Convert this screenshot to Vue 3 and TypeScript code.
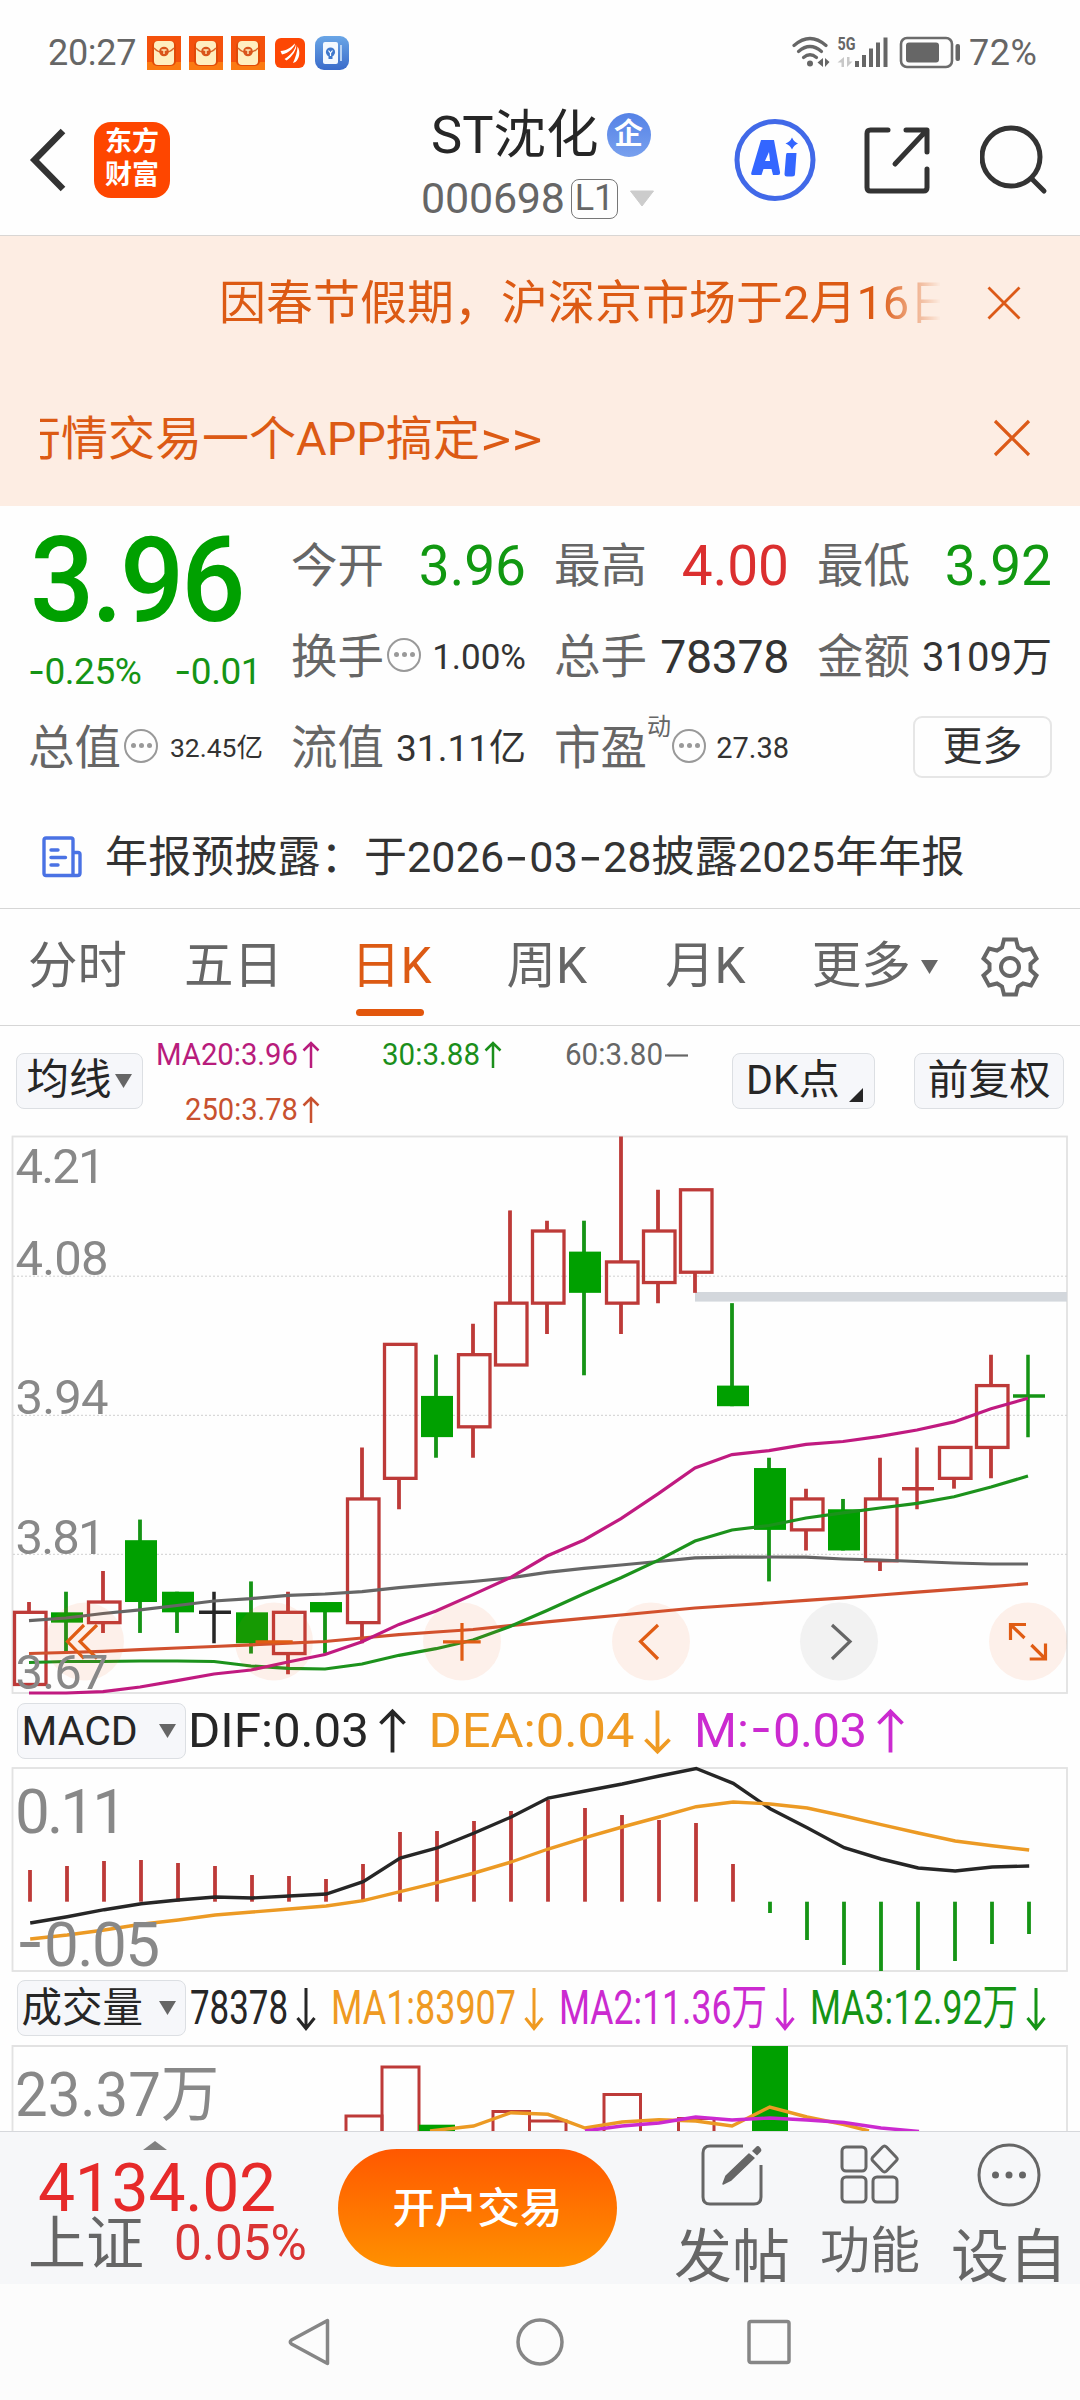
<script setup lang="ts">
type Tone = 'up' | 'down' | 'flat'
type Candle = [tone: Tone, high: number, top: number, bottom: number, low: number]

const STEP = 37
const TOP_PRICE = 4.2117
const priceY = (p: number): number => 1136.5 + (TOP_PRICE - p) * 1030.6

const candles: Candle[] = [
  ['up', 3.76, 3.75, 3.68, 3.68],
  ['down', 3.77, 3.75, 3.74, 3.71],
  ['up', 3.79, 3.76, 3.74, 3.73],
  ['down', 3.84, 3.82, 3.76, 3.73],
  ['down', 3.77, 3.77, 3.75, 3.73],
  ['flat', 3.77, 3.75, 3.75, 3.72],
  ['down', 3.78, 3.75, 3.72, 3.71],
  ['up', 3.77, 3.75, 3.71, 3.69],
  ['down', 3.76, 3.76, 3.75, 3.71],
  ['up', 3.91, 3.86, 3.74, 3.72],
  ['up', 4.01, 4.01, 3.88, 3.85],
  ['down', 4.0, 3.96, 3.92, 3.9],
  ['up', 4.03, 4.0, 3.93, 3.9],
  ['up', 4.14, 4.05, 3.99, 3.99],
  ['up', 4.13, 4.12, 4.05, 4.02],
  ['down', 4.13, 4.1, 4.06, 3.98],
  ['up', 4.2117, 4.09, 4.05, 4.02],
  ['up', 4.16, 4.12, 4.07, 4.05],
  ['up', 4.16, 4.16, 4.08, 4.06],
  ['down', 4.05, 3.97, 3.95, 3.95],
  ['down', 3.9, 3.89, 3.83, 3.78],
  ['up', 3.87, 3.86, 3.83, 3.81],
  ['down', 3.86, 3.85, 3.81, 3.81],
  ['up', 3.9, 3.86, 3.8, 3.79],
  ['up', 3.91, 3.87, 3.87, 3.85],
  ['up', 3.91, 3.91, 3.88, 3.87],
  ['up', 4.0, 3.97, 3.91, 3.88],
  ['down', 4.0, 3.96, 3.96, 3.92],
]
const toneColor: Record<Tone, string> = { up: '#bd3a38', down: '#00a000', flat: '#262626' }
const wickColor: Record<Tone, string> = { up: '#bd3a38', down: '#159415', flat: '#262626' }

const shapes = candles.map(([tone, high, top, bottom, low], i) => {
  const x = 29 + STEP * i
  return {
    x,
    tone,
    fill: toneColor[tone],
    stroke: wickColor[tone],
    high: priceY(high),
    top: priceY(top),
    bottom: priceY(bottom),
    low: priceY(low),
    cross: top === bottom,
  }
})

const line = (ys: number[], x0: number): string =>
  ys.map((y, i) => `${(x0 + STEP * i).toFixed(1)},${y}`).join(' ')

const averages = [
  {
    color: '#d0502e',
    points: line([1653.5, 1652.5, 1651.3, 1649.7, 1648, 1646.5, 1644.8, 1643.2, 1641.5, 1638, 1634.6, 1632, 1629.5, 1625.6, 1621.8, 1618.4, 1615, 1611.5, 1608, 1605.5, 1603, 1600.4, 1597.8, 1595, 1592.2, 1589.4, 1586.6, 1583.7], 29),
  },
  {
    color: '#666666',
    points: line([1620.7, 1618, 1613.5, 1609.8, 1605.5, 1601, 1598.6, 1595.3, 1594, 1591.7, 1587.7, 1584.4, 1581.5, 1577.8, 1572.4, 1568.4, 1565, 1561.5, 1557.8, 1557.2, 1557, 1557.2, 1559, 1560, 1561.5, 1563, 1564, 1564], 29),
  },
  {
    color: '#1c921c',
    points: line([1662.5, 1661.5, 1661.5, 1661, 1661, 1661.5, 1666, 1668.4, 1669, 1664, 1655.3, 1648.7, 1640, 1626.5, 1610.5, 1593.8, 1577.8, 1560.4, 1541, 1530, 1525.5, 1518, 1512.8, 1508, 1503.3, 1496.8, 1487, 1476], 29),
  },
  {
    color: '#c01a80',
    points: line([1693, 1693, 1691.6, 1687, 1680.7, 1674, 1670, 1662, 1654.5, 1641.8, 1624.4, 1611, 1594.6, 1577.8, 1556, 1540, 1518.6, 1493.9, 1468, 1454.6, 1450.6, 1444.4, 1441.5, 1436.4, 1430, 1421.9, 1408.8, 1398.3], 29),
  },
]

const axis = [
  { t: '4.21', y: 1182.5, w: 90 },
  { t: '4.08', y: 1275, w: 93 },
  { t: '3.94', y: 1414, w: 93 },
  { t: '3.81', y: 1554, w: 90 },
  { t: '3.67', y: 1688.5, w: 93 },
]

const macdZero = 1901.7
const macdBars = [1870, 1866, 1861, 1860, 1863, 1866, 1875, 1876, 1879, 1864, 1832, 1831, 1821, 1811, 1800, 1808, 1815, 1820, 1823, 1864, 1913, 1940, 1965, 1971, 1970, 1961, 1944, 1934]
const dif = line([1923, 1916.7, 1909.7, 1903.7, 1900, 1897, 1898, 1896, 1894, 1881.7, 1858, 1848, 1833, 1817, 1798, 1791, 1784, 1776, 1768.5, 1783.3, 1808.7, 1827.7, 1847.7, 1859, 1868, 1871, 1867, 1866], 30.2)
const dea = line([1939, 1935, 1930, 1924.3, 1920, 1915, 1912, 1909, 1906, 1900.7, 1891.7, 1882.7, 1873, 1862, 1849, 1837.7, 1827, 1817, 1806.7, 1802, 1804, 1808, 1816, 1824.7, 1833, 1841, 1845.7, 1850], 30.2)

const volumes = [
  { x: 346, w: 36, y: 2116, up: true },
  { x: 382, w: 37, y: 2067, up: true },
  { x: 419, w: 36, y: 2124.7, up: false },
  { x: 493, w: 36.5, y: 2111.5, up: true },
  { x: 529.5, w: 36.5, y: 2121, up: true },
  { x: 604, w: 36.5, y: 2094.5, up: true },
  { x: 678.5, w: 35.5, y: 2118.5, up: true },
  { x: 752, w: 36, y: 2046, up: false },
]

const tabs = [
  { t: '分时', on: false },
  { t: '五日', on: false },
  { t: '日K', on: true },
  { t: '周K', on: false },
  { t: '月K', on: false },
  { t: '更多', on: false },
]

const legends = [
  { t: 'MA20:3.96', x: 156, w: 142, y: 1065, c: '#b81c7c', a: 311 },
  { t: '30:3.88', x: 382, w: 98, y: 1065, c: '#1b8f1b', a: 493 },
  { t: '250:3.78', x: 185, w: 113, y: 1120, c: '#c8512f', a: 311 },
]

const macdLegend = [
  { t: 'DIF:0.03', x: 188, w: 181, c: '#262626', a: 392.5, up: true },
  { t: 'DEA:0.04', x: 428.5, w: 206, c: '#ef9a22', a: 657.5, up: false },
  { t: 'M:', x: 694, w: 55, c: '#cb2ad0', a: 890.5, up: true },
]
const volLegend = [
  { t: '78378', x: 190, w: 98, c: '#262626', a: 306 },
  { t: 'MA1:83907', x: 331, w: 185, c: '#ef9a22', a: 534 },
  { t: 'MA2:11.36万', x: 559, w: 208, c: '#cb2ad0', a: 785 },
  { t: 'MA3:12.92万', x: 810, w: 208, c: '#159415', a: 1036 },
]
</script>

<template>
  <div class="screen">
    <div class="status">
      <span class="clock">20:27</span>
      <svg v-for="n in 3" :key="n" class="envelope" width="34" height="34" viewBox="0 0 34 34">
        <rect width="34" height="34" fill="#f4510c" />
        <rect y="26" width="34" height="8" fill="#fb7a12" />
        <rect x="5" y="5" width="24" height="25" rx="5" fill="#e04a08" />
        <rect x="7" y="5" width="20" height="24" rx="4" fill="#ffeec0" />
        <path d="M7 12 C12 18 22 18 27 12" fill="none" stroke="#d9682a" stroke-width="1.3" />
        <circle cx="17" cy="15.5" r="4.8" fill="#d9541c" />
        <path d="M14.5 14h5M17 14v4" stroke="#ffe9b8" stroke-width="1.4" />
      </svg>
      <svg class="app4" width="30" height="30" viewBox="0 0 30 30">
        <rect width="30" height="30" rx="6" fill="#fd4705" />
        <path d="M5.500 13C12 13 16 9 20 5.500C20 9 14 15 7 16.500Z M9.500 21C16 17 20 12 21 6.500C22.500 11 17 19 11.500 22.500Z M18 25C20.500 19 22.500 14 22.500 8.500C26 14 24 21 20.500 24Z" fill="#fff" />
      </svg>
      <svg class="app5" width="34" height="34" viewBox="0 0 34 34">
        <defs>
          <linearGradient id="blue" x1="0" y1="0" x2="0" y2="1">
            <stop offset="0" stop-color="#6aa6e6" />
            <stop offset="1" stop-color="#3a6bca" />
          </linearGradient>
        </defs>
        <rect width="34" height="34" rx="9" fill="url(#blue)" />
        <rect x="8" y="6" width="15" height="22" rx="2" fill="#f3f8fe" />
        <rect x="25" y="9" width="2" height="16" fill="#b8d2f2" />
        <circle cx="15.500" cy="16" r="4.600" fill="#3f78cc" />
        <path d="M13.500 19h4v4h-4z" fill="#3f78cc" />
        <path d="M13.500 14.500l2 2.500 2-2.500M15.500 17v3" stroke="#fff" stroke-width="1.200" fill="none" />
      </svg>
      <svg class="signals" width="170" height="36" viewBox="790 35 170 36">
        <g fill="none" stroke="#666" stroke-width="3.200" stroke-linecap="round">
          <path d="M794 45.500 Q810 31.500 826 45.500" />
          <path d="M798.500 51.500 Q810 41.500 821.500 51.500" />
          <path d="M803.500 57.500 Q810 52 816.500 57.500" />
        </g>
        <circle cx="810" cy="63.500" r="3" fill="#666" />
        <path d="M817.500 62.500L823 58V67Z M825 58V67L829.500 62Z" fill="#666" />
        <text x="837.500" y="50" font-size="18" font-weight="700" fill="#666" textLength="18" lengthAdjust="spacingAndGlyphs">5G</text>
        <path d="M837.500 62.500L844 57V67H841.500V62.500Z M847 57V67L852.500 61.500H849.500V57Z" fill="#c8c8c8" />
        <path d="M857 61v6M864 55v12M871 48.500v18.500M878 42.500v24.500M885.500 37.500v29.500" stroke="#666" stroke-width="4" />
        <rect x="901" y="38" width="51" height="29" rx="6" fill="none" stroke="#6c6c6c" stroke-width="2.600" />
        <rect x="906" y="42.500" width="33" height="20" rx="3" fill="#666" />
        <rect x="955.500" y="44" width="4.500" height="17" rx="2" fill="#666" />
      </svg>
      <span class="battery">72%</span>
    </div>

    <header class="header">
      <svg class="back" width="40" height="64" viewBox="0 0 40 64">
        <path d="M34 3 L5.500 32 L34 61" fill="none" stroke="#333" stroke-width="6.500" stroke-linejoin="miter" />
      </svg>
      <div class="logo"><span>东方</span><span>财富</span></div>
      <div class="title">
        <div class="name">ST沈化<span class="badge">企</span></div>
        <div class="code">000698<span class="level">L1</span>
          <svg width="26" height="17" viewBox="0 0 26 17"><path d="M1.500 1h23L13 16z" fill="#ccc" stroke="#ccc" stroke-linejoin="round" /></svg>
        </div>
      </div>
      <svg class="ai" width="82" height="84" viewBox="0 0 82 84">
        <ellipse cx="41" cy="42" rx="38" ry="38.500" fill="none" stroke="#4169e8" stroke-width="5" />
        <path d="M27 22h13l6 32q.500 3-2 3h-5l-1.500-6h-8l-2 6h-9q-2 0-1-3z M31 43h5l-1-9z" fill="#3366ff" fill-rule="evenodd" />
        <path d="M53 35h9.500l-1.500 21q0 2.500-3 2.500h-5q-2.500 0-2.500-2.500l1.500-18.500q0-2.500 1-2.500z" fill="#3366ff" />
        <path d="M58 19.500q2 4.500 6 6q-4 1.500-6 6q-2-4.500-6.500-6q4.500-1.500 6.500-6z" fill="#3366ff" />
      </svg>
      <svg class="share" width="66" height="67" viewBox="0 0 66 67">
        <g fill="none" stroke="#333" stroke-width="5" stroke-linecap="round" stroke-linejoin="round">
          <path d="M24 3H6.500Q3 3 3 6.500V60.500Q3 64 6.500 64H59.500Q63 64 63 60.500V42" />
          <path d="M42 3H63V25M61 5L31 37" />
        </g>
      </svg>
      <svg class="search" width="68" height="70" viewBox="0 0 68 70">
        <circle cx="31" cy="32" r="29" fill="none" stroke="#333" stroke-width="5" />
        <path d="M52 54 L64 66" stroke="#333" stroke-width="5" stroke-linecap="round" />
      </svg>
    </header>

    <section class="banner">
      <div class="notice first">
        <div class="marquee fade">因春节假期，沪深京市场于2月16日</div>
        <svg width="34" height="34" viewBox="0 0 34 34"><path d="M1.500 1.500l31 31M32.500 1.500l-31 31" stroke="#dc5a18" stroke-width="2.800" /></svg>
      </div>
      <div class="notice second">
        <div class="marquee clip"><span>行情交易一个APP搞定<u>&gt;&gt;</u></span></div>
        <svg width="38" height="38" viewBox="0 0 38 38"><path d="M2 2l34 34M36 2L2 36" stroke="#dc5a18" stroke-width="3.200" /></svg>
      </div>
    </section>

    <section class="quote">
      <div class="price">
        <div class="big">3.96</div>
        <div class="diff"><span><i>-</i>0.25%</span><span><i>-</i>0.01</span></div>
      </div>
      <div class="cell"><label>今开</label><b class="xl green">3.96</b></div>
      <div class="cell"><label>最高</label><b class="xl red">4.00</b></div>
      <div class="cell"><label>最低</label><b class="xl green">3.92</b></div>
      <div class="cell"><label>换手</label><span class="dots"><i></i><i></i><i></i></span><b class="v35">1.00%</b></div>
      <div class="cell"><label>总手</label><b class="v46">78378</b></div>
      <div class="cell"><label>金额</label><b class="v40">3109万</b></div>
      <div class="cell"><label>总值</label><span class="dots"><i></i><i></i><i></i></span><b class="v26">32.45亿</b></div>
      <div class="cell"><label>流值</label><b class="v37">31.11亿</b></div>
      <div class="cell"><label>市盈</label><sup>动</sup><span class="dots"><i></i><i></i><i></i></span><b class="v28">27.38</b></div>
      <div class="cell end"><button class="more">更多</button></div>
    </section>

    <div class="report">
      <svg width="40" height="42" viewBox="0 0 40 42">
        <g fill="none" stroke="#4a72e4" stroke-width="3.400" stroke-linejoin="round" stroke-linecap="round">
          <path d="M31 39.500H4Q2 39.500 2 37.500V4Q2 2 4 2H29Q31 2 31 4V39.500H35.500Q38 39.500 38 37V18.500Q38 16.500 36 16.500H31" />
          <path d="M9 14h7M9 21.500h14.500M9 29h7" />
        </g>
      </svg>
      <span>年报预披露：于2026<i>-</i>03<i>-</i>28披露2025年年报</span>
    </div>

    <nav class="tabs">
      <span v-for="tab in tabs" :key="tab.t" class="tab" :class="{ on: tab.on }">{{ tab.t }}</span>
      <svg class="caret" width="17" height="14" viewBox="0 0 17 14"><path d="M0 0h17L8.500 14z" fill="#666" /></svg>
      <svg class="gear" width="60" height="60" viewBox="-30 -30 60 60">
        <path d="M-6 -27.500H6L8 -19.500L13 -16.500L21 -18.500L26.500 -8.500L20.500 -3V3L26.500 8.500L21 18.500L13 16.500L8 19.500L6 27.500H-6L-8 19.500L-13 16.500L-21 18.500L-26.500 8.500L-20.500 3V-3L-26.500 -8.500L-21 -18.500L-13 -16.500L-8 -19.500Z" fill="none" stroke="#666" stroke-width="4" />
        <circle r="9" fill="none" stroke="#666" stroke-width="4" />
      </svg>
    </nav>

    <div class="toolbar">
      <button class="chip avg">均线<svg width="17" height="14" viewBox="0 0 17 14"><path d="M0 0h17L8.500 14z" fill="#666" /></svg></button>
      <svg class="legend" width="560" height="107" viewBox="150 1026 560 107">
        <g v-for="l in legends" :key="l.t">
          <text :x="l.x" :y="l.y" :fill="l.c" font-size="30.500" :textLength="l.w" lengthAdjust="spacingAndGlyphs">{{ l.t }}</text>
          <path :transform="`translate(${l.a} ${l.y})`" d="M0 3V-22M-7.500 -14.500L0 -22L7.500 -14.500" :stroke="l.c" stroke-width="2.500" fill="none" />
        </g>
        <text x="565" y="1065" fill="#666" font-size="30.500" textLength="98" lengthAdjust="spacingAndGlyphs">60:3.80</text>
        <path d="M665 1055.500H688" stroke="#666" stroke-width="2.200" />
      </svg>
      <button class="chip dk">DK点<svg width="14" height="14" viewBox="0 0 14 14"><path d="M14 0V14H0z" fill="#262626" /></svg></button>
      <button class="chip fq">前复权</button>
    </div>

    <svg class="kline" width="1080" height="564" viewBox="0 1133 1080 564">
      <rect x="12.500" y="1136.500" width="1054.500" height="556.500" fill="none" stroke="#e2e2e2" stroke-width="1.800" />
      <path d="M13 1276.200H1067M13 1415.300H1067M13 1554.300H1067" stroke="#cfcfcf" stroke-width="1" stroke-dasharray="2 2" />
      <rect x="695" y="1292" width="372" height="9.600" fill="#d3d7dc" />
      <g v-for="s in shapes" :key="s.x">
        <template v-if="s.cross">
          <path :d="`M${s.x} ${s.high}V${s.low}M${s.x - 15} ${s.top}h32`" :stroke="s.stroke" stroke-width="3.500" />
        </template>
        <template v-else-if="s.tone === 'up'">
          <path :d="`M${s.x} ${s.high}V${s.top}M${s.x} ${s.bottom}V${s.low}`" :stroke="s.stroke" stroke-width="3.800" />
          <rect :x="s.x - 14.500" :y="s.top" width="31.500" :height="s.bottom - s.top" fill="none" :stroke="s.stroke" stroke-width="3.300" />
        </template>
        <template v-else>
          <path :d="`M${s.x} ${s.high}V${s.low}`" :stroke="s.stroke" stroke-width="3.800" />
          <rect :x="s.x - 15" :y="s.top" width="32" :height="s.bottom - s.top" :fill="s.fill" />
        </template>
      </g>
      <polyline v-for="a in averages" :key="a.color" :points="a.points" fill="none" :stroke="a.color" stroke-width="3.200" />
      <g fill="#f06020" fill-opacity=".09">
        <circle cx="85" cy="1641.500" r="39" />
        <circle cx="274" cy="1641.500" r="39" />
        <circle cx="462" cy="1641.500" r="39" />
        <circle cx="651" cy="1641.500" r="39" />
        <circle cx="1028" cy="1641.500" r="39" />
      </g>
      <circle cx="839" cy="1641.500" r="39" fill="#f2f2f2" />
      <g fill="none" stroke="#e05c14" stroke-width="3.200">
        <path d="M84 1625L67.500 1641.500L84 1658.500M97 1625L80 1641.500L97 1658.500" />
        <path d="M255.500 1641.800H292.700M443 1641.800H480.700M462 1623V1660.700" />
        <path d="M658 1625L640.500 1641.500L658 1659" />
        <path d="M1026 1624.500H1010.500V1640M1011 1625L1024.500 1638M1029.700 1659H1045.500V1643.600M1045 1658.500L1031.400 1645" />
      </g>
      <path d="M832 1625L850 1641.500L832 1659" fill="none" stroke="#666" stroke-width="3.200" />
      <text v-for="a in axis" :key="a.t" x="15.500" :y="a.y" class="axis" font-size="49" :textLength="a.w">{{ a.t }}</text>
    </svg>

    <div class="subhead macd">
      <button class="chip">MACD<svg width="17" height="14" viewBox="0 0 17 14"><path d="M0 0h17L8.500 14z" fill="#666" /></svg></button>
      <svg width="894" height="68" viewBox="186 1697 894 68">
        <g v-for="l in macdLegend" :key="l.t">
          <text :x="l.x" y="1746.500" :fill="l.c" font-size="49" :textLength="l.w" lengthAdjust="spacingAndGlyphs">{{ l.t }}</text>
          <path :transform="`translate(${l.a} 1731.500)` + (l.up ? '' : ' scale(1 -1)')" d="M0 21V-20M-12 -8L0 -20L12 -8" :stroke="l.c" stroke-width="3.800" fill="none" />
        </g>
        <text x="750" y="1745" fill="#cb2ad0" font-size="49" font-family="Inter" textLength="22" lengthAdjust="spacingAndGlyphs">-</text>
        <text x="773" y="1746.500" fill="#cb2ad0" font-size="49" textLength="94">0.03</text>
      </svg>
    </div>

    <svg class="sub" width="1080" height="208" viewBox="0 1765 1080 208">
      <rect x="12.500" y="1768" width="1054.500" height="203" fill="none" stroke="#e2e2e2" stroke-width="1.800" />
      <path v-for="(b, i) in macdBars" :key="i" :d="`M${30 + 37 * i} ${macdZero}V${b}`" :stroke="b < macdZero ? '#bd3a38' : '#159415'" stroke-width="3.800" />
      <polyline :points="dif" fill="none" stroke="#262626" stroke-width="3.400" />
      <polyline :points="dea" fill="none" stroke="#ec9a24" stroke-width="3.400" />
      <text x="15" y="1832.500" class="axis" font-size="62" textLength="112">0.11</text>
      <text x="16" y="1964" class="axis" font-size="62" font-family="Inter" textLength="28" lengthAdjust="spacingAndGlyphs">-</text>
      <text x="44" y="1966" class="axis" font-size="62" textLength="116">0.05</text>
    </svg>

    <div class="subhead vol">
      <button class="chip">成交量<svg width="17" height="14" viewBox="0 0 17 14"><path d="M0 0h17L8.500 14z" fill="#666" /></svg></button>
      <svg width="894" height="70" viewBox="186 1973 894 70">
        <g v-for="l in volLegend" :key="l.t">
          <text :x="l.x" y="2024" :fill="l.c" font-size="48" :textLength="l.w" lengthAdjust="spacingAndGlyphs">{{ l.t }}</text>
          <path :transform="`translate(${l.a} 2009)`" d="M0 -21V19M-8.500 9L0 19.500L8.500 9" :stroke="l.c" stroke-width="3" fill="none" />
        </g>
      </svg>
    </div>

    <svg class="sub" width="1080" height="88" viewBox="0 2043 1080 88">
      <path d="M12.500 2140V2046H1067V2140" fill="none" stroke="#e2e2e2" stroke-width="1.800" />
      <rect v-for="v in volumes" :key="v.x" :x="v.x" :y="v.y" :width="v.w" height="100" :fill="v.up ? 'none' : '#00a000'" :stroke="v.up ? '#bd3a38' : 'none'" stroke-width="3" />
      <polyline points="430,2131 473.500,2126 511,2112.700 548,2114.300 585,2128 622,2122 659,2119.700 695.700,2121 732,2126 769.700,2107 807,2117 844,2124.500 869,2131" fill="none" stroke="#ec9a24" stroke-width="3.400" />
      <polyline points="585,2131 622,2126 659,2123 695.700,2117 732,2120 769.700,2118 807,2120 844,2122.500 881,2128 919,2131.500" fill="none" stroke="#cb2ad0" stroke-width="3.400" />
      <text x="15" y="2115.500" class="axis" font-size="62" textLength="204" lengthAdjust="spacingAndGlyphs">23.37万</text>
    </svg>

    <footer class="bottom">
      <div class="index">
        <svg width="24" height="9" viewBox="0 0 24 9"><path d="M0 9L12 0L24 9z" fill="#808080" /></svg>
        <div class="points">4134.02</div>
        <div class="market"><span>上证</span><em>0.05%</em></div>
      </div>
      <button class="trade">开户交易</button>
      <div class="act a1">
        <svg width="64" height="64" viewBox="0 0 64 64">
          <path d="M43 3H10Q3 3 3 10V54Q3 61 10 61H54Q61 61 61 54V22" fill="none" stroke="#666" stroke-width="3" />
          <path d="M23 41L26 33L49 11L54 15L31 37Z" fill="#666" stroke="#666" stroke-width="1.500" stroke-linejoin="round" />
          <path d="M52 8L56 4Q58 2 60 4.500Q62.500 7 60.500 9L57 12.500Z" fill="#666" />
        </svg>
        <span>发帖</span>
      </div>
      <div class="act a2">
        <svg width="60" height="62" viewBox="0 0 60 62">
          <g fill="none" stroke="#666" stroke-width="3">
            <rect x="2" y="4" width="24" height="24" rx="4" />
            <rect x="2" y="34" width="24" height="25" rx="4" />
            <rect x="33" y="34" width="24" height="25" rx="4" />
            <path d="M42.500 4L32.500 14.500Q31.500 16 32.500 17.500L42.500 28Q44.500 30 46.500 28L56.500 17.500Q58 16 56.500 14.500L46.500 4Q44.500 2 42.500 4Z" />
          </g>
        </svg>
        <span>功能</span>
      </div>
      <div class="act a3">
        <svg width="64" height="64" viewBox="0 0 64 64">
          <circle cx="32" cy="32" r="30" fill="none" stroke="#666" stroke-width="3" />
          <g fill="#666"><circle cx="18.500" cy="32" r="3.500" /><circle cx="32" cy="32" r="3.500" /><circle cx="45.500" cy="32" r="3.500" /></g>
        </svg>
        <span>设自</span>
      </div>
    </footer>

    <div class="sysnav">
      <svg width="44" height="50" viewBox="0 0 44 50"><path d="M40.500 3.500V46.500L4.500 27Q2 25 4.500 23Z" fill="none" stroke="#868686" stroke-width="3.500" stroke-linejoin="round" /></svg>
      <svg width="50" height="50" viewBox="0 0 50 50"><circle cx="25" cy="25" r="22" fill="none" stroke="#868686" stroke-width="3.500" /></svg>
      <svg width="44" height="46" viewBox="0 0 44 46"><rect x="2" y="2.500" width="40" height="41" rx="2" fill="none" stroke="#868686" stroke-width="3.500" /></svg>
    </div>
  </div>
</template>

<style>
body {
  background: #fefefe;
}
</style>

<style scoped>
.screen {
  width: 1080px;
  height: 2400px;
  overflow: hidden;
  background: #fefefe;
  font-family: Roboto, "Noto Sans CJK SC", sans-serif;
  line-height: 1;
  color: #333;
  white-space: nowrap;
}
.screen * {
  box-sizing: border-box;
}
svg {
  display: block;
  flex: none;
}
i {
  font-style: normal;
  font-family: Inter, sans-serif;
}
u {
  text-decoration: none;
}
button {
  font-family: inherit;
  line-height: 1;
  padding: 0;
  margin: 0;
  flex: none;
}

.status {
  height: 86px;
  padding: 20px 0 0 48px;
  display: flex;
  align-items: center;
  color: #666;
  font-size: 36px;
}
.clock {
  width: 99px;
  letter-spacing: -0.3px;
}
.envelope {
  margin-right: 8px;
}
.app4 {
  margin-left: 2px;
}
.app5 {
  margin-left: 10px;
}
.signals {
  margin-left: 441px;
}
.battery {
  margin-left: 9px;
  letter-spacing: 0.5px;
}

.header {
  height: 150px;
  margin-top: -1px;
  padding-left: 29px;
  display: flex;
  align-items: center;
}
.logo {
  width: 76px;
  height: 76px;
  margin-left: 25px;
  border-radius: 17px;
  background: #fe4600;
  color: #fff;
  font-size: 27px;
  font-weight: 700;
  line-height: 33px;
  padding-top: 4px;
  display: flex;
  flex-direction: column;
  align-items: center;
}
.title {
  width: 315px;
  margin-left: 251px;
  height: 150px;
  padding-top: 23px;
}
.name {
  display: flex;
  align-items: center;
  height: 54px;
  margin-left: 10px;
  font-size: 52.500px;
  color: #262626;
}
.badge {
  width: 44px;
  height: 44px;
  margin-left: 8px;
  border-radius: 50%;
  background: linear-gradient(#5582e6, #78a0ee);
  color: #fff;
  font-size: 29px;
  font-weight: 700;
  line-height: 43px;
  text-align: center;
}
.code {
  display: flex;
  align-items: center;
  height: 60px;
  margin-top: 7px;
  padding-bottom: 2px;
  font-size: 43px;
  letter-spacing: -0.2px;
  color: #666;
}
.level {
  width: 47px;
  height: 40px;
  margin: 2px 11px 0 6px;
  border: 1.500px solid #777;
  border-radius: 8px;
  font-size: 36px;
  line-height: 37px;
  text-align: center;
}
.ai {
  margin-left: -2px;
}
.share {
  margin-left: 48px;
}
.search {
  margin-left: 50px;
}

.banner {
  height: 271px;
  border-top: 1.500px solid #d9d6d4;
  background: #fdede3;
  color: #dc5a14;
  font-size: 47px;
}
.notice {
  display: flex;
  align-items: center;
}
.first {
  height: 134px;
  padding-left: 219px;
}
.marquee {
  overflow: hidden;
  line-height: 64px;
}
.fade {
  width: 721px;
  margin-right: 47px;
  -webkit-mask-image: linear-gradient(90deg, #000 660px, transparent 722px);
  mask-image: linear-gradient(90deg, #000 660px, transparent 722px);
}
.second {
  height: 136px;
  padding-left: 40px;
}
.clip {
  width: 900px;
  margin-right: 53px;
  padding-top: 2px;
}
.clip span {
  display: inline-block;
  margin-left: -26px;
}
.clip u {
  display: inline-block;
  transform: scaleX(1.27);
  transform-origin: 0 50%;
}

.quote {
  height: 289px;
  padding: 15px 0 0 30px;
  display: grid;
  grid-template-columns: repeat(4, 232px);
  grid-template-rows: repeat(3, 91px);
  column-gap: 31px;
}
.price {
  grid-row: 1 / 3;
  color: #00a000;
}
.big {
  height: 118px;
  padding-top: 1px;
  font-size: 119px;
  font-weight: 500;
  letter-spacing: -3px;
  line-height: 118px;
  transform: scaleX(0.95);
  transform-origin: 0 50%;
}
.diff {
  display: flex;
  justify-content: space-between;
  padding-right: 1px;
  margin: 13px 0 0 -2px;
  font-size: 37px;
  letter-spacing: -0.5px;
  color: #159415;
}
.cell {
  display: flex;
  align-items: center;
  height: 91px;
}
.cell label {
  font-size: 46.500px;
  color: #666;
  margin-left: -2px;
}
.cell b {
  font-weight: 400;
  margin: 0 -1px 0 auto;
}
.end {
  justify-content: flex-end;
}
.dots {
  width: 34px;
  height: 34px;
  margin: -6px 0 0 3px;
  border: 2.500px solid #999;
  border-radius: 50%;
  display: flex;
  align-items: center;
  justify-content: center;
  gap: 3px;
}
.dots i {
  width: 5px;
  height: 5px;
  border-radius: 50%;
  background: #999;
}
sup {
  font-size: 24px;
  line-height: 24px;
  color: #666;
  margin: -44px -2px 0 0;
}
.xl {
  font-size: 55px;
}
.green {
  color: #119811;
}
.red {
  color: #db2f2f;
}
.v46 { font-size: 46.500px; letter-spacing: -0.4px; }
.v40 { font-size: 40px; }
.v37 { font-size: 37px; }
.v35 { font-size: 35px; }
.v28 { font-size: 29px; }
.v26 { font-size: 26.500px; }
.more {
  width: 139px;
  height: 62px;
  margin: -3px -1px 0 0;
  border: 2px solid #e6e6e6;
  border-radius: 9px;
  background: #fefefe;
  font-size: 40px;
  color: #333;
}

.report {
  height: 114px;
  padding: 11px 0 0 42px;
  display: flex;
  align-items: center;
  font-size: 43px;
  border-bottom: 1.500px solid #d6d6d6;
}
.report span {
  margin-left: 23px;
  letter-spacing: 0.15px;
}
.report i {
  display: inline-block;
  width: 25px;
  text-align: center;
  transform: scaleX(1.25);
}

.tabs {
  height: 117px;
  padding-left: 28px;
  display: flex;
  align-items: center;
  font-size: 49.500px;
  color: #666;
  border-bottom: 1.500px solid #d6d6d6;
}
.tab {
  position: relative;
  margin-right: 58px;
}
.tab:nth-child(1) { margin-right: 57px; }
.tab:nth-child(2) { margin-right: 68px; }
.tab:nth-child(3) { margin-right: 75px; }
.tab:nth-child(4) { margin-right: 78px; }
.tab:nth-child(5) { margin-right: 66px; }
.tab:nth-child(6) { margin-right: 10px; }
.on {
  color: #dc5a14;
}
.on::after {
  content: "";
  position: absolute;
  left: 5px;
  bottom: -24px;
  width: 68px;
  height: 7px;
  border-radius: 4px;
  background: #e2560c;
}
.gear {
  margin-left: 42px;
}

.toolbar {
  height: 107px;
  display: flex;
  align-items: center;
  padding-left: 15.500px;
}
.chip {
  height: 56px;
  border: 1.500px solid #dcdfe3;
  border-radius: 8px;
  background: #f6f7fa;
  color: #262626;
  font-size: 41px;
  display: flex;
  align-items: center;
}
.toolbar .chip {
  margin-top: 2px;
}
.avg {
  width: 127px;
  padding-left: 10px;
  font-size: 42.500px;
}
.avg svg {
  margin-left: 3px;
}
.legend {
  margin-left: 7.500px;
}
.dk {
  width: 143px;
  margin-left: 22px;
  padding-left: 13px;
  font-size: 41px;
}
.dk svg {
  margin: 28px 0 0 9px;
}
.fq {
  width: 150px;
  margin-left: 39px;
  justify-content: center;
  font-size: 41px;
}
.axis {
  fill: #888;
}

.subhead {
  display: flex;
  align-items: center;
  padding-left: 16.500px;
}
.subhead .chip {
  width: 169px;
  padding: 0 9px 0 4px;
  justify-content: space-between;
}
.macd {
  height: 68px;
}
.vol {
  height: 70px;
}
.vol .chip {
  font-size: 40.500px;
}

.bottom {
  height: 153px;
  overflow: hidden;
  display: flex;
  align-items: flex-start;
  border-top: 1.500px solid #d6d8dc;
  background: #f6f7f9;
}
.index {
  width: 338px;
  padding: 9px 0 0 28px;
}
.index svg {
  margin-left: 115px;
}
.points {
  margin: 6px 0 0 10px;
  font-size: 66px;
  letter-spacing: -0.3px;
  color: #e62a2a;
}
.market {
  display: flex;
  align-items: center;
  margin-top: -7px;
  font-size: 58px;
  color: #666;
}
.market em {
  font-style: normal;
  font-size: 49.500px;
  margin-left: 30px;
  color: #d93434;
}
.trade {
  width: 279px;
  height: 118px;
  margin-top: 17px;
  padding-top: 2px;
  border: 0;
  border-radius: 59px;
  background: linear-gradient(#ff5800, #ff9000);
  color: #fff;
  font-size: 42.500px;
  font-weight: 500;
}
.act {
  display: flex;
  flex-direction: column;
  align-items: center;
  padding-top: 11px;
  color: #666;
}
.act span {
  font-size: 58px;
  margin-top: 21px;
}
.a1 { margin-left: 57px; }
.a2 { margin-left: 30px; }
.a2 span { font-size: 50px; margin-top: 21px; }
.a3 { margin-left: 31px; }

.sysnav {
  height: 116px;
  padding: 0 0 0 287px;
  display: flex;
  align-items: center;
  background: #fcfcfc;
}
.sysnav svg:nth-child(2) { margin-left: 184px; }
.sysnav svg:nth-child(3) { margin-left: 182px; }
</style>
